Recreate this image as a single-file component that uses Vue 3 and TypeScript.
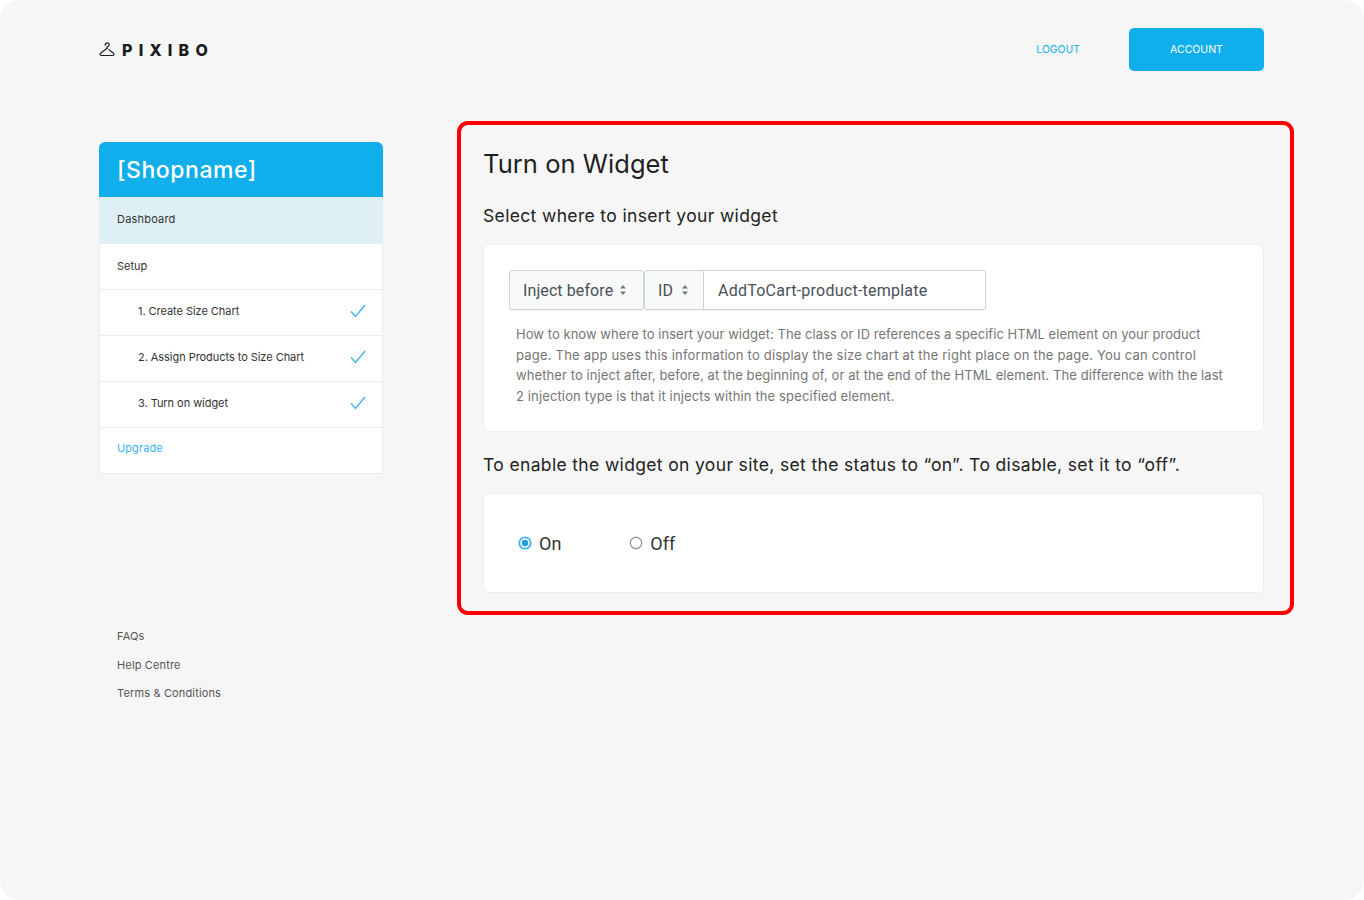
<script setup lang="ts">
type Step = { label: string }
type HelpLine = { text: string; spacing: number }

const steps: Step[] = [
  { label: '1. Create Size Chart' },
  { label: '2. Assign Products to Size Chart' },
  { label: '3. Turn on widget' },
]

const footerLinks = ['FAQs', 'Help Centre', 'Terms & Conditions']

const helpLines: HelpLine[] = [
  { text: 'How to know where to insert your widget: The class or ID references a specific HTML element on your product', spacing: 0.05 },
  { text: 'page. The app uses this information to display the size chart at the right place on the page. You can control', spacing: 0.206 },
  { text: 'whether to inject after, before, at the beginning of, or at the end of the HTML element. The difference with the last', spacing: 0.087 },
  { text: '2 injection type is that it injects within the specified element.', spacing: 0.13 },
]
</script>

<template>
  <div class="page">
    <header class="topbar">
      <div class="logo">
        <svg class="hanger" width="16" height="15" viewBox="0 0 16 15" fill="none">
          <path d="M6.200 3.400C5.900 1.900 7 .8 8.200.8c1.200 0 2.100 1 2 2-.1 1.200-1 1.700-1.800 2.100-.6.300-.6.800-.3 1.300" stroke="#222" stroke-width="1.200" stroke-linecap="round" />
          <path d="M8.100 6.200 1.500 11.300c-.9.700-.5 2.200.7 2.200h11.600c1.200 0 1.600-1.500.7-2.200L10 7.700" stroke="#222" stroke-width="1.200" stroke-linejoin="round" stroke-linecap="round" />
        </svg>
        <span class="wordmark">PIXIBO</span>
      </div>
      <nav class="topnav">
        <a class="logout">LOGOUT</a>
        <a class="account">ACCOUNT</a>
      </nav>
    </header>

    <div class="columns">
      <aside class="side">
        <div class="menu">
          <div class="shop">[Shopname]</div>
          <div class="row dash">Dashboard</div>
          <div class="row setup">Setup</div>
          <div v-for="s in steps" :key="s.label" class="row step">
            <span>{{ s.label }}</span>
            <svg width="16" height="14" viewBox="0 0 16 14" fill="none">
              <path d="M1 7.500 5.500 12.500 15 1" stroke="#3fb4ee" stroke-width="1.400" />
            </svg>
          </div>
          <div class="row upgrade">Upgrade</div>
        </div>
        <ul class="links">
          <li v-for="l in footerLinks" :key="l">{{ l }}</li>
        </ul>
      </aside>

      <main class="panel">
        <h1>Turn on Widget</h1>
        <h2 class="sub-first">Select where to insert your widget</h2>
        <section class="card card-inject">
          <div class="input-group">
            <div class="select sel-a">
              Inject before
              <svg width="8" height="12" viewBox="0 0 8 12"><path d="M4 1 7 4.500H1zM4 11 1 7.500h6z" fill="#777" /></svg>
            </div>
            <div class="select sel-b">
              ID
              <svg width="8" height="12" viewBox="0 0 8 12"><path d="M4 1 7 4.500H1zM4 11 1 7.500h6z" fill="#777" /></svg>
            </div>
            <div class="value">AddToCart-product-template</div>
          </div>
          <p class="help">
            <span v-for="line in helpLines" :key="line.text" :style="{ letterSpacing: line.spacing + 'px' }">{{ line.text }}</span>
          </p>
        </section>

        <h2 class="sub-second">To enable the widget on your site, set the status to “on”. To disable, set it to “off”.</h2>
        <section class="card card-status">
          <label class="radio">
            <svg width="14" height="14" viewBox="0 0 14 14" fill="none">
              <circle cx="7" cy="7" r="5.700" stroke="#3fb4ee" stroke-width="1.800" />
              <circle cx="7" cy="7" r="3.200" fill="#1f9fdc" />
            </svg>
            On
          </label>
          <label class="radio">
            <svg width="14" height="14" viewBox="0 0 14 14" fill="none">
              <circle cx="7" cy="7" r="5.700" stroke="#999" stroke-width="1.400" />
            </svg>
            Off
          </label>
        </section>
      </main>
    </div>
  </div>
</template>

<style>
html, body {
  background: #fff;
}
</style>

<style scoped>
.page {
  height: 900px;
  box-sizing: border-box;
  background: #f6f6f6;
  border-radius: 20px;
  padding: 28px 70px 0 99px;
  font-family: Inter, "Liberation Sans", sans-serif;
  color: #222;
  overflow: hidden;
}

.topbar {
  display: flex;
  justify-content: space-between;
  align-items: center;
  height: 43px;
  padding-right: 30px;
}
.logo {
  display: flex;
  align-items: center;
  gap: 7px;
}
.wordmark {
  font-size: 16px;
  font-weight: 800;
  letter-spacing: 6.200px;
  color: #1b1b1b;
}
.topnav {
  display: flex;
  align-items: center;
  gap: 49px;
}
.logout {
  font-size: 10.400px;
  color: #10aeea;
}
.account {
  width: 135px;
  height: 43px;
  display: flex;
  align-items: center;
  justify-content: center;
  background: #10aeea;
  border-radius: 5px;
  color: #fff;
  font-size: 10.500px;
}

.columns {
  display: flex;
  gap: 74px;
  margin-top: 50px;
}
.side {
  width: 284px;
  padding-top: 21px;
  flex: none;
}
.menu {
  background: #fff;
  border: 1px solid #ececec;
  border-top: 0;
  border-radius: 6px 6px 0 0;
  font-size: 11px;
}
.shop {
  height: 55px;
  margin: 0 -1px;
  padding-left: 18px;
  display: flex;
  align-items: center;
  background: #10aeea;
  border-radius: 6px 6px 0 0;
  color: #fff;
  font-size: 23px;
  font-weight: 500;
  letter-spacing: 0.550px;
}
.row {
  height: 46px;
  box-sizing: border-box;
  padding: 0 16px 3px 17px;
  display: flex;
  align-items: center;
  justify-content: space-between;
  border-bottom: 1px solid #ececec;
  color: #333;
}
.dash {
  height: 47px;
  margin: 0 -1px;
  padding: 0 18px 4px;
  background: #deeff6;
  border-bottom: 0;
  letter-spacing: 0.200px;
}
.setup {
  padding-bottom: 1px;
}
.step {
  padding-left: 38px;
  letter-spacing: -0.050px;
}
.upgrade {
  height: 45px;
  padding-bottom: 5px;
  border-bottom: 0;
  color: #3fb4ee;
  letter-spacing: 0.100px;
}
.links {
  list-style: none;
  margin: 148px 0 0;
  padding: 0 0 0 18px;
  font-size: 11px;
  letter-spacing: 0.150px;
  color: #555;
}
.links li {
  height: 28.500px;
  line-height: 28.500px;
}

.panel {
  width: 837px;
  height: 494px;
  box-sizing: border-box;
  border: 4px solid #f00;
  border-radius: 11px;
  padding: 0 26px 0 22px;
}
h1 {
  margin: 21px 0 0;
  font-size: 25.500px;
  line-height: 36px;
  font-weight: 400;
  letter-spacing: 0.050px;
  color: #1f1f1f;
}
h2 {
  margin: 0;
  font-size: 17.500px;
  line-height: 24px;
  font-weight: 400;
  letter-spacing: 0.350px;
  color: #222;
}
.sub-first {
  margin-top: 22px;
}
.sub-second {
  margin-top: 21px;
}
.card {
  background: #fff;
  border: 1px solid #eee;
  border-radius: 6px;
  box-sizing: border-box;
}
.card-inject {
  margin-top: 16px;
  height: 188px;
  padding: 25px 25px 0;
}
.input-group {
  display: flex;
  width: 477px;
  height: 40px;
  font-family: Roboto, sans-serif;
  font-size: 16px;
  letter-spacing: 0.100px;
  color: #4a5058;
}
.select {
  display: flex;
  align-items: center;
  gap: 6px;
  box-sizing: border-box;
  border: 1px solid #cfd4d9;
  border-radius: 3px;
  background: #f8f9f9;
  padding-left: 13px;
  box-shadow: 0 1px 1px rgba(0, 0, 0, 0.06);
}
.sel-a {
  width: 135px;
}
.sel-b {
  width: 60px;
  gap: 8px;
  border-radius: 3px 0 0 3px;
}
.value {
  flex: 1;
  display: flex;
  align-items: center;
  padding-left: 14px;
  border: 1px solid #cfd4d9;
  border-left: 0;
  border-radius: 0 3px 3px 0;
  letter-spacing: 0.240px;
  box-shadow: 0 1px 1px rgba(0, 0, 0, 0.06);
}
.help {
  margin: 14px 0 0 7px;
  font-size: 13px;
  line-height: 20.700px;
  color: #757575;
  white-space: nowrap;
}
.help span {
  display: block;
}
.card-status {
  margin-top: 16px;
  height: 100px;
  padding: 0 34px;
  display: flex;
  align-items: center;
  gap: 68px;
  font-family: Roboto, sans-serif;
  font-size: 18px;
  color: #333;
}
.radio {
  display: flex;
  align-items: center;
  gap: 7px;
}
</style>
